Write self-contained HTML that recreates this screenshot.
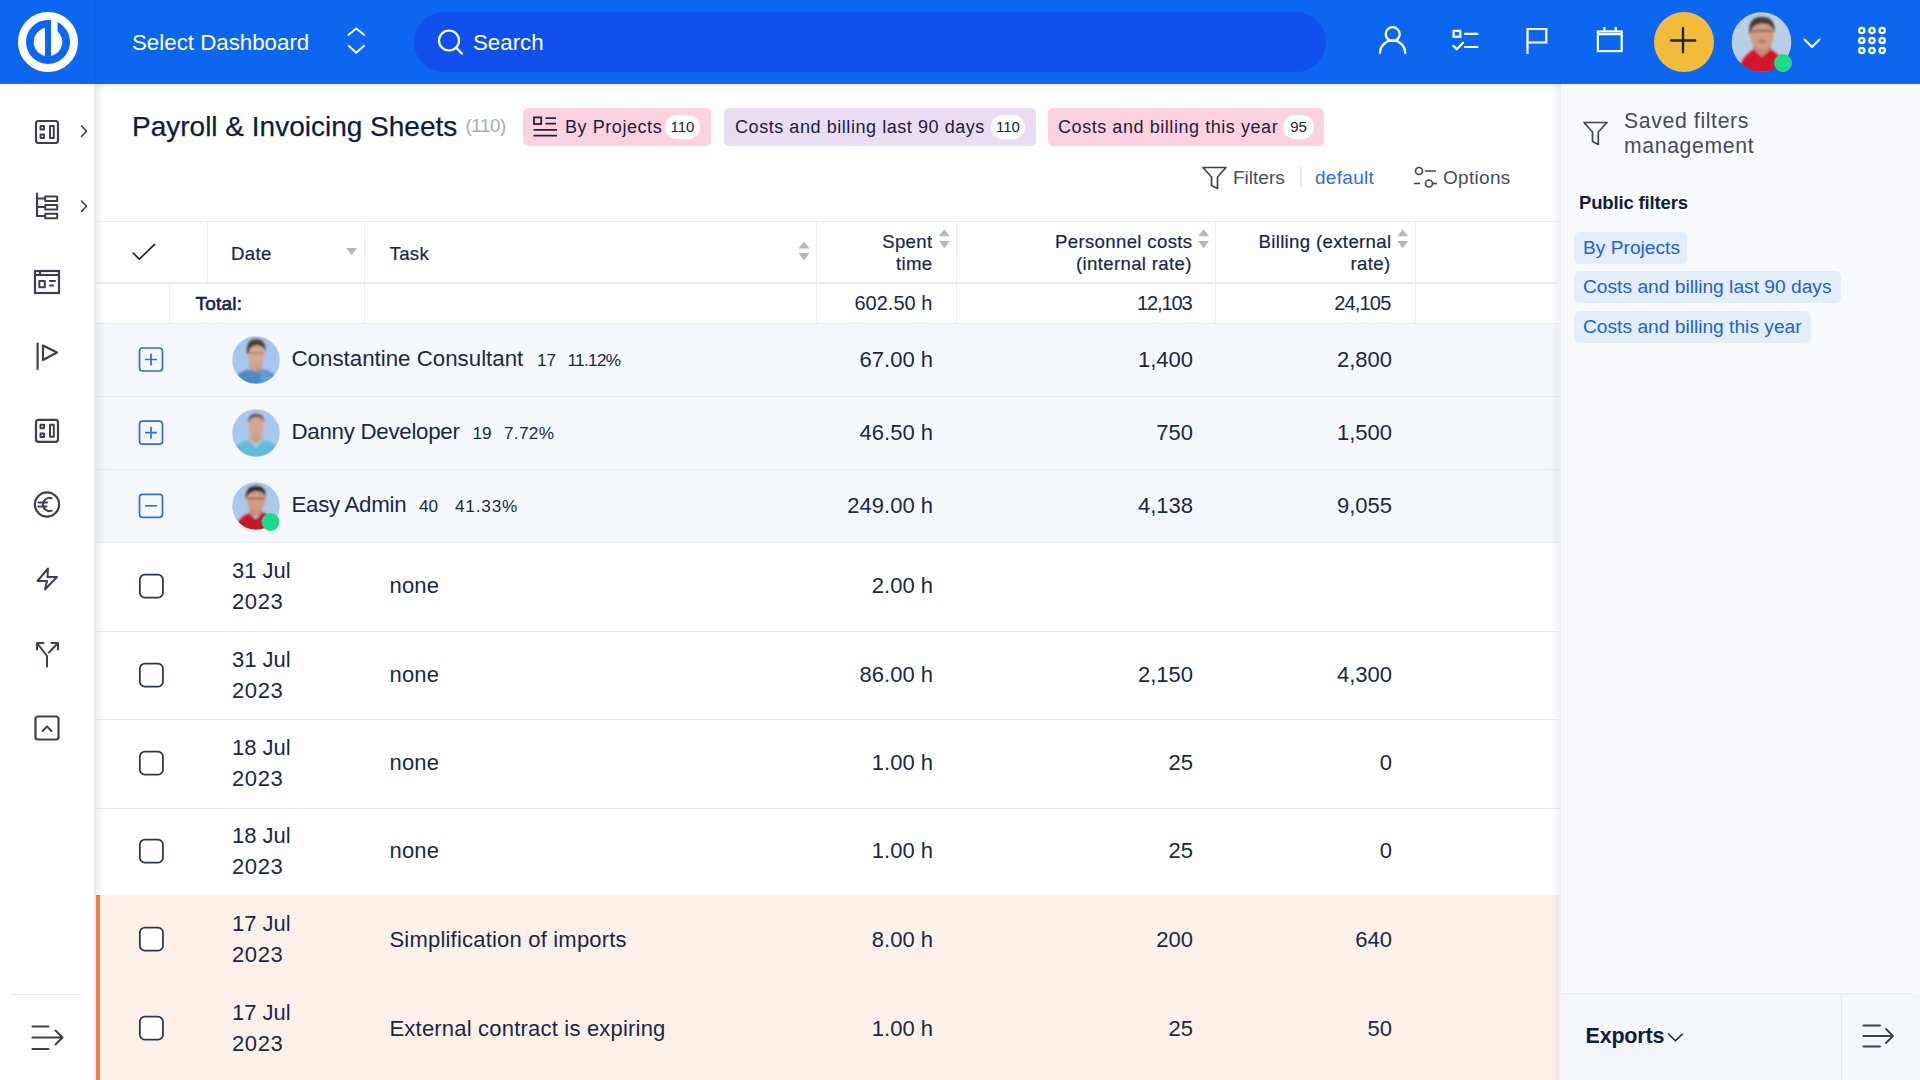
<!DOCTYPE html>
<html><head><meta charset="utf-8">
<style>
*{box-sizing:border-box;margin:0;padding:0}
html,body{width:1920px;height:1080px;overflow:hidden;background:#fff;font-family:"Liberation Sans",sans-serif;color:#0f1d3d}
.abs{position:absolute}
.nw{white-space:nowrap}
#top{position:absolute;left:0;top:0;width:1920px;height:84px;background:#0d66ef}
#side{position:absolute;left:0;top:84px;width:95px;height:996px;background:#fff}
#main{position:absolute;left:95px;top:84px;width:1465px;height:996px;background:#fff}
#panel{position:absolute;left:1560px;top:84px;width:360px;height:996px;background:#f9fafe}
.tag{position:absolute;top:24px;height:38px;border-radius:5px}
.tag .tt{position:absolute;top:8px;font-size:18px;line-height:22px;white-space:nowrap;color:#1a2140;letter-spacing:0.56px}
.bdg{position:absolute;top:7px;height:24px;border-radius:12px;background:#fff;font-size:15px;line-height:24px;text-align:center;color:#1a2140}
.chip{position:absolute;left:14px;height:32px;border-radius:6px;background:#e3edfb;color:#2061d6;font-size:19.2px;line-height:32px;padding-left:9px;white-space:nowrap}
</style></head><body>
<div id="top">
  <div class="abs" style="left:95px;top:0;width:1px;height:84px;background:rgba(0,0,40,0.05)"></div>
  <svg class="abs" style="left:0;top:0" width="95" height="84" viewBox="0 0 95 84">
    <circle cx="48" cy="42" r="26" fill="none" stroke="#fff" stroke-width="8"/>
    <circle cx="48" cy="42" r="14.3" fill="#fff"/>
    <rect x="45" y="20" width="6" height="37" fill="#0d66ef"/>
    <rect x="51" y="18" width="6.5" height="14" fill="#fff"/>
  </svg>
  <div class="abs nw" style="left:132px;top:30px;font-size:22.3px;line-height:26px;color:#fff">Select Dashboard</div>
  <svg class="abs" style="left:340px;top:20px" width="32" height="44" viewBox="0 0 32 44">
    <path d="M8.5 14.8 L16.3 8.5 L24 14.8 M8.5 25.8 L16.3 32.8 L24 25.8" fill="none" stroke="#fff" stroke-width="1.9" stroke-linecap="round" stroke-linejoin="round"/>
  </svg>
  <div class="abs" style="left:414px;top:12px;width:912px;height:60px;border-radius:30px;background:#1150ec"></div>
  <svg class="abs" style="left:430px;top:22px" width="40" height="40" viewBox="0 0 40 40">
    <circle cx="19" cy="18.5" r="10" fill="none" stroke="#fff" stroke-width="2.2"/>
    <path d="M26.3 26 L32 31.6" stroke="#fff" stroke-width="2.2" stroke-linecap="round"/>
  </svg>
  <div class="abs nw" style="left:473px;top:30px;font-size:22.3px;line-height:26px;color:#fff">Search</div>
  <svg class="abs" style="left:1370px;top:20px" width="46" height="44" viewBox="1370 20 46 44" fill="none" stroke="#fff" stroke-width="2.3" stroke-linecap="round">
    <circle cx="1392.7" cy="34.2" r="7"/>
    <path d="M1380 53 A12.6 12.6 0 0 1 1405.2 53"/>
  </svg>
  <svg class="abs" style="left:1440px;top:20px" width="200" height="44" viewBox="1440 20 200 44" fill="none" stroke="#fff" stroke-width="2.2">
    <rect x="1453.6" y="30.9" width="6.7" height="5.8"/>
    <path d="M1465 33.8 H1477.5 M1465 47 H1477.5" stroke-linecap="round"/>
    <path d="M1453.3 45.8 L1456.8 49.2 L1463 42.8" stroke-linecap="round" stroke-linejoin="round"/>
    <path d="M1527.5 54 V29 H1546.3 V42.5 H1527.5"/>
    <rect x="1597.9" y="31.4" width="23.8" height="19.7"/>
    <path d="M1597.9 34.2 H1621.7 M1604.4 27 V31 M1615.8 27 V31"/>
  </svg>
  <div class="abs" style="left:1654px;top:12px;width:60px;height:60px;border-radius:50%;background:#f3bb3b"></div>
  <svg class="abs" style="left:1654px;top:12px" width="60" height="60" viewBox="0 0 60 60">
    <path d="M17 28.5 H41.2 M29 16 V40.4" stroke="#1b2233" stroke-width="2.3" stroke-linecap="round"/>
  </svg>
  <svg class="abs" style="left:1731px;top:11px" width="62" height="62" viewBox="0 0 62 62">
    <defs><clipPath id="av0"><circle cx="30.5" cy="31" r="29.8"/></clipPath><filter id="avb" x="-10%" y="-10%" width="120%" height="120%"><feGaussianBlur stdDeviation="1.1"/></filter></defs>
    <g clip-path="url(#av0)"><g filter="url(#avb)">
      <rect x="-2" y="-2" width="66" height="66" fill="#b9cfe8"/>
      <path d="M22 34 L40 34 L41 46 H21 Z" fill="#c48a76"/>
      <ellipse cx="31" cy="24" rx="12" ry="14.5" fill="#d09a85"/>
      <path d="M18 24 Q16 5 31 5.5 Q45 5.5 44 22 Q41 12 31 12.5 Q21 13 18 24 Z" fill="#4a3a30"/>
      <path d="M20 20 H42" stroke="#5a4038" stroke-width="1.4" opacity="0.8"/>
      <ellipse cx="31" cy="30" rx="4" ry="2" fill="#c07a70"/>
      <path d="M6 62 Q9 46 22 38 L31 46 L40 38 Q52 44 56 62 Z" fill="#d3122f"/>
    </g></g>
    <circle cx="52" cy="52" r="9" fill="#1fd88c"/>
  </svg>
  <svg class="abs" style="left:1798px;top:30px" width="28" height="24" viewBox="0 0 28 24">
    <path d="M6.5 9.5 L14 17 L21.5 9.5" fill="none" stroke="#fff" stroke-width="1.9" stroke-linecap="round" stroke-linejoin="round"/>
  </svg>
  <svg class="abs" style="left:1850px;top:20px" width="44" height="44" viewBox="1850 20 44 44" fill="none" stroke="#fff" stroke-width="2.3">
    <circle cx="1861.8" cy="30.5" r="2.65"/><circle cx="1872" cy="30.5" r="2.65"/><circle cx="1882.2" cy="30.5" r="2.65"/>
    <circle cx="1861.8" cy="40.5" r="2.65"/><circle cx="1872" cy="40.5" r="2.65"/><circle cx="1882.2" cy="40.5" r="2.65"/>
    <circle cx="1861.8" cy="50.5" r="2.65"/><circle cx="1872" cy="50.5" r="2.65"/><circle cx="1882.2" cy="50.5" r="2.65"/>
  </svg>
</div>
<div id="side">
  <svg class="abs" style="left:0;top:-84px" width="95" height="1080" viewBox="0 0 95 1080" fill="none" stroke="#3b3e55" stroke-width="2.2" stroke-linecap="round" stroke-linejoin="round">
    <rect x="36" y="121" width="22" height="22" rx="2.5"/>
    <rect x="40.5" y="126" width="3.5" height="3.5" stroke-width="2"/>
    <rect x="40.5" y="134.6" width="3.5" height="3.5" stroke-width="2"/>
    <rect x="50" y="126" width="3.8" height="12" stroke-width="2"/>
    <path d="M81.5 126 L86.5 131.3 L81.5 136.5" stroke-width="1.6"/>
    <path d="M37 193.5 V216 H45 M37 198.5 H45 M37 207 H45"/>
    <rect x="45.2" y="196.5" width="12" height="4.5" stroke-width="2"/>
    <rect x="45.2" y="205" width="12" height="4.5" stroke-width="2"/>
    <rect x="45.2" y="213.8" width="12" height="4.5" stroke-width="2"/>
    <path d="M81.5 201 L86.5 206.2 L81.5 211.5" stroke-width="1.6"/>
    <rect x="35" y="271" width="24" height="22" stroke-linejoin="miter" stroke-linecap="butt"/>
    <path d="M35 275 H59 M40 271 V275" stroke-linecap="butt"/>
    <rect x="39.3" y="281" width="5.5" height="6.2" stroke-width="2"/>
    <path d="M50 281 H55 M50 285.4 H53" stroke-width="2"/>
    <path d="M37.6 343.5 V369"/>
    <path d="M43 345.5 L57 352.5 L43 360 Z"/>
    <rect x="36" y="419.8" width="22" height="22" rx="2.5"/>
    <rect x="40.5" y="424.8" width="3.5" height="3.5" stroke-width="2"/>
    <rect x="40.5" y="433.4" width="3.5" height="3.5" stroke-width="2"/>
    <rect x="50" y="424.8" width="3.8" height="12" stroke-width="2"/>
    <circle cx="47" cy="504.5" r="12.1"/>
    <path d="M51.5 498.2 A6.6 6.6 0 1 0 51.5 510.8 M38.5 502.5 H47 M38.5 506.5 H46.5" stroke-width="2"/>
    <path d="M48 568.5 L37.5 581 H47 L45 589.5 L57 577 H47.5 Z" stroke-width="2"/>
    <path d="M47 666.5 V656 L37 643 M37 643 V649.5 M37 643 H43.5 M49 652.5 L58 643 M58 643 H51.5 M58 643 V649.5" stroke-width="2"/>
    <rect x="35.5" y="716.5" width="23" height="23" rx="2.5"/>
    <path d="M42.5 731 L47 726.5 L51.5 731" stroke-width="2"/>
    <path d="M32.5 1026.5 H48.5 M32.5 1037.5 H62 M32.5 1049 H48.5 M55.5 1030.5 L62.5 1037.5 L55.5 1044.5" stroke-width="2"/>
  </svg>
  <div class="abs" style="left:12px;top:910px;width:70px;height:1px;background:#e6e8ee"></div>
  <div class="abs" style="left:94px;top:0;width:1px;height:996px;background:#e8e9ee"></div>
</div>
<div id="main">
  <div class="abs" style="left:0;top:0;width:1465px;height:10px;background:linear-gradient(#f3f4f7,rgba(255,255,255,0))"></div>
  <div class="abs" style="left:0;top:0;width:10px;height:996px;z-index:3;background:linear-gradient(90deg,rgba(200,204,215,0.35),rgba(255,255,255,0))"></div>
  <div class="abs" style="right:0;top:0;width:10px;height:996px;z-index:3;background:linear-gradient(270deg,rgba(205,208,218,0.3),rgba(255,255,255,0))"></div>
  <div class="abs nw" style="left:37px;top:26px;font-size:28px;line-height:34px;color:#0f1d3d;-webkit-text-stroke:0.25px #0f1d3d">Payroll &amp; Invoicing Sheets</div>
  <div class="abs nw" style="left:370.5px;top:29.5px;font-size:18.6px;line-height:24px;color:#a4a9b8;letter-spacing:-0.35px">(110)</div>
  <div class="tag" style="left:428px;width:188px;background:#fed1e0">
    <svg class="abs" style="left:9px;top:8px" width="26" height="22" viewBox="0 0 26 22" fill="none" stroke="#1f2540" stroke-width="1.8">
      <rect x="2" y="1.4" width="7.2" height="6.6"/>
      <path d="M13.5 2.2 H24 M13.5 7.6 H24 M1.5 13.8 H25 M1.5 19.6 H25"/>
    </svg>
    <span class="tt" style="left:42px">By Projects</span>
    <span class="bdg" style="left:142px;width:35px">110</span>
  </div>
  <div class="tag" style="left:629px;width:312px;background:#eadcf3">
    <span class="tt" style="left:11px">Costs and billing last 90 days</span>
    <span class="bdg" style="left:267px;width:34px">110</span>
  </div>
  <div class="tag" style="left:953px;width:276px;background:#fed1e0">
    <span class="tt" style="left:10px">Costs and billing this year</span>
    <span class="bdg" style="left:235px;width:31px">95</span>
  </div>
  <svg class="abs" style="left:1105px;top:80px" width="30" height="28" viewBox="1200 164 30 28" fill="none" stroke="#3f4358" stroke-width="1.7" stroke-linejoin="round">
    <path d="M1203 167.5 H1226 L1217.5 177 V188.5 L1211.5 185.6 V177 Z"/>
  </svg>
  <div class="abs nw" style="left:1138px;top:83px;font-size:19px;line-height:22px;color:#474b5e">Filters</div>
  <div class="abs" style="left:1205px;top:83px;width:2px;height:20px;background:#e6e8ee"></div>
  <div class="abs nw" style="left:1220px;top:83px;font-size:19px;line-height:22px;color:#2b6ddb;letter-spacing:0.3px">default</div>
  <svg class="abs" style="left:1315px;top:80px" width="30" height="28" viewBox="1410 164 30 28" fill="none" stroke="#3f4358" stroke-width="1.7">
    <circle cx="1419" cy="171" r="3.5"/><path d="M1425 171 H1436 M1414 183.5 H1420"/><circle cx="1429" cy="183.5" r="3.5"/><path d="M1432.5 183.5 H1437"/>
  </svg>
  <div class="abs nw" style="left:1348px;top:83px;font-size:19px;line-height:22px;color:#474b5e;letter-spacing:0.3px">Options</div>
</div>
<div id="tbl" class="abs" style="left:0;top:0;width:1920px;height:1080px">
<div class="abs" style="left:96px;top:221px;width:1463px;height:1px;background:#ebecee"></div>
<div class="abs" style="left:96px;top:282px;width:1463px;height:2px;background:#e8e9ed"></div>
<div class="abs" style="left:96px;top:323px;width:1463px;height:1px;background:#e8e9ed"></div>
<div class="abs" style="left:207px;top:222px;width:1px;height:60px;background:#ededf0"></div>
<div class="abs" style="left:364px;top:222px;width:1px;height:101px;background:#ededf0"></div>
<div class="abs" style="left:816px;top:222px;width:1px;height:101px;background:#ededf0"></div>
<div class="abs" style="left:956px;top:222px;width:1px;height:101px;background:#ededf0"></div>
<div class="abs" style="left:1215px;top:222px;width:1px;height:101px;background:#ededf0"></div>
<div class="abs" style="left:1415px;top:222px;width:1px;height:101px;background:#ededf0"></div>
<div class="abs" style="left:169px;top:284px;width:1px;height:39px;background:#ededf0"></div>
<svg class="abs" style="left:130px;top:240px" width="28" height="24" viewBox="130 240 28 24"><path d="M133.3 253.2 L139.4 259.1 L154.6 244.3" fill="none" stroke="#1f2540" stroke-width="1.7" stroke-linecap="round" stroke-linejoin="round"/></svg>
<div class="abs nw" style="left:231px;top:241.93px;font-size:18.6px;line-height:23.25px;color:#182848;font-weight:400;-webkit-text-stroke:0.2px #162545;letter-spacing:0.35px;">Date</div>
<div class="abs nw" style="left:389.5px;top:241.93px;font-size:18.6px;line-height:23.25px;color:#182848;font-weight:400;-webkit-text-stroke:0.2px #162545;letter-spacing:0.35px;">Task</div>
<div class="abs nw" style="right:987.5px;top:229.93px;font-size:18.6px;line-height:23.25px;color:#182848;font-weight:400;text-align:right;-webkit-text-stroke:0.2px #162545;letter-spacing:0.35px;">Spent</div>
<div class="abs nw" style="right:987.5px;top:251.93px;font-size:18.6px;line-height:23.25px;color:#182848;font-weight:400;text-align:right;-webkit-text-stroke:0.2px #162545;letter-spacing:0.35px;">time</div>
<div class="abs nw" style="right:727.5px;top:229.93px;font-size:18.6px;line-height:23.25px;color:#182848;font-weight:400;text-align:right;-webkit-text-stroke:0.2px #162545;letter-spacing:0.35px;">Personnel costs</div>
<div class="abs nw" style="right:728.2px;top:251.93px;font-size:18.6px;line-height:23.25px;color:#182848;font-weight:400;text-align:right;-webkit-text-stroke:0.2px #162545;letter-spacing:0.35px;">(internal rate)</div>
<div class="abs nw" style="right:528.5px;top:229.93px;font-size:18.6px;line-height:23.25px;color:#182848;font-weight:400;text-align:right;-webkit-text-stroke:0.2px #162545;letter-spacing:0.35px;">Billing (external</div>
<div class="abs nw" style="right:529.5px;top:251.93px;font-size:18.6px;line-height:23.25px;color:#182848;font-weight:400;text-align:right;-webkit-text-stroke:0.2px #162545;letter-spacing:0.35px;">rate)</div>
<svg class="abs" style="left:0;top:0" width="1920" height="300" viewBox="0 0 1920 300" fill="#b3b7c2"><path d="M346 248 L357 248 L351.5 255.3 Z"/><path d="M798.5 248.4 L804.0 241.4 L809.5 248.4 Z"/><path d="M798.5 253.1 L804.0 260.4 L809.5 253.1 Z"/><path d="M938.8 236.2 L944.3 229.2 L949.8 236.2 Z"/><path d="M938.8 240.89999999999998 L944.3 248.2 L949.8 240.89999999999998 Z"/><path d="M1198 236.2 L1203.5 229.2 L1209 236.2 Z"/><path d="M1198 240.89999999999998 L1203.5 248.2 L1209 240.89999999999998 Z"/><path d="M1397.2 236.2 L1402.7 229.2 L1408.2 236.2 Z"/><path d="M1397.2 240.89999999999998 L1402.7 248.2 L1408.2 240.89999999999998 Z"/></svg>
<div class="abs nw" style="left:195.5px;top:291.54px;font-size:19px;line-height:23.75px;color:#182848;font-weight:400;-webkit-text-stroke:0.6px #162545;letter-spacing:0.2px;">Total:</div>
<div class="abs nw" style="right:987.7px;top:290.57px;font-size:20px;line-height:25.0px;color:#182848;font-weight:400;text-align:right;">602.50 h</div>
<div class="abs nw" style="right:728.5px;top:290.57px;font-size:20px;line-height:25.0px;color:#182848;font-weight:400;text-align:right;letter-spacing:-1.1px;">12,103</div>
<div class="abs nw" style="right:529.5px;top:290.57px;font-size:20px;line-height:25.0px;color:#182848;font-weight:400;text-align:right;letter-spacing:-0.8px;">24,105</div>
<div class="abs" style="left:96px;top:324px;width:1463px;height:72px;background:#f4f8fd"></div>
<div class="abs" style="left:96px;top:396px;width:1463px;height:1px;background:#e7eaef"></div>
<svg class="abs" style="left:0;top:0" width="200" height="560" viewBox="0 0 200 560" fill="none" stroke="#2f6ed9" stroke-width="1.7"><rect x="139.5" y="348.0" width="23" height="23" rx="3"/><path d="M145 359.5 H157 M151 353.5 V365.5"/></svg>
<svg class="abs" style="left:230px;top:334.5px" width="52" height="52" viewBox="0 0 52 52"><defs><clipPath id="clc"><circle cx="24" cy="24" r="23.8"/></clipPath><filter id="blc" x="-10%" y="-10%" width="120%" height="120%"><feGaussianBlur stdDeviation="0.9"/></filter></defs><g transform="translate(2 1)"><g clip-path="url(#clc)"><g filter="url(#blc)"><rect x="-2" y="-2" width="52" height="52" fill="#a5c7ec"/><path d="M17 26 L30 26 L31 36 H17 Z" fill="#cf9c86"/><ellipse cx="24" cy="19.5" rx="8.3" ry="10" fill="#d6a791"/><path d="M14.5 17 Q13.5 3 24 2.8 Q34.5 3 34 16 Q31 9 24 9.5 Q17.5 10 16 18 Z" fill="#57402f"/><path d="M16.5 17 H32" stroke="#6b5248" stroke-width="1" opacity="0.7"/><path d="M0 50 Q2 37 14 34 Q20 33 24 36 Q28 33 34 34 Q45 37 48 50 Z" fill="#4d8ac6"/><path d="M28 35 Q40 36 46 48 L30 50 Z" fill="#73a9d8" opacity="0.7"/></g></g></g></svg>
<div class="abs nw" style="left:291.5px;top:344.83px;font-size:22.3px;line-height:27.88px;color:#182848;font-weight:400;letter-spacing:0px;">Constantine Consultant</div>
<div class="abs nw" style="left:537px;top:349.79px;font-size:17.2px;line-height:21.5px;color:#182848;font-weight:400;">17</div>
<div class="abs nw" style="left:567.5px;top:349.79px;font-size:17.2px;line-height:21.5px;color:#182848;font-weight:400;letter-spacing:-0.7px;">11.12%</div>
<div class="abs nw" style="right:987px;top:346.13px;font-size:22px;line-height:27.5px;color:#182848;font-weight:400;text-align:right;">67.00 h</div>
<div class="abs nw" style="right:727px;top:346.13px;font-size:22px;line-height:27.5px;color:#182848;font-weight:400;text-align:right;">1,400</div>
<div class="abs nw" style="right:528px;top:346.13px;font-size:22px;line-height:27.5px;color:#182848;font-weight:400;text-align:right;">2,800</div>
<div class="abs" style="left:96px;top:397px;width:1463px;height:72.30000000000001px;background:#f4f8fd"></div>
<div class="abs" style="left:96px;top:469px;width:1463px;height:1px;background:#e7eaef"></div>
<svg class="abs" style="left:0;top:0" width="200" height="560" viewBox="0 0 200 560" fill="none" stroke="#2f6ed9" stroke-width="1.7"><rect x="139.5" y="421.15" width="23" height="23" rx="3"/><path d="M145 432.65 H157 M151 426.65 V438.65"/></svg>
<svg class="abs" style="left:230px;top:407.65px" width="52" height="52" viewBox="0 0 52 52"><defs><clipPath id="cld"><circle cx="24" cy="24" r="23.8"/></clipPath><filter id="bld" x="-10%" y="-10%" width="120%" height="120%"><feGaussianBlur stdDeviation="0.9"/></filter></defs><g transform="translate(2 1)"><g clip-path="url(#cld)"><g filter="url(#bld)"><rect x="-2" y="-2" width="52" height="52" fill="#a7c8ec"/><path d="M18 25 L30 25 L31 36 H17 Z" fill="#cfa28b"/><ellipse cx="24" cy="16.5" rx="8" ry="11.5" fill="#d5a68f"/><path d="M15.5 15 Q15.5 4 24 4.5 Q32.5 4.5 32.5 13 Q30 8 24 8 Q18 8 15.5 15 Z" fill="#6e5646"/><path d="M-1 50 Q2 34 15 31 L24 38 L33 31 Q46 34 49 50 Z" fill="#62bbe0"/><path d="M19 31 L24 38 L29 31" fill="none" stroke="#9fd6ea" stroke-width="1.5"/></g></g></g></svg>
<div class="abs nw" style="left:291.5px;top:417.98px;font-size:22.3px;line-height:27.88px;color:#182848;font-weight:400;letter-spacing:-0.28px;">Danny Developer</div>
<div class="abs nw" style="left:472.5px;top:422.94px;font-size:17.2px;line-height:21.5px;color:#182848;font-weight:400;">19</div>
<div class="abs nw" style="left:504px;top:422.94px;font-size:17.2px;line-height:21.5px;color:#182848;font-weight:400;letter-spacing:0.3px;">7.72%</div>
<div class="abs nw" style="right:987px;top:419.28px;font-size:22px;line-height:27.5px;color:#182848;font-weight:400;text-align:right;">46.50 h</div>
<div class="abs nw" style="right:727px;top:419.28px;font-size:22px;line-height:27.5px;color:#182848;font-weight:400;text-align:right;">750</div>
<div class="abs nw" style="right:528px;top:419.28px;font-size:22px;line-height:27.5px;color:#182848;font-weight:400;text-align:right;">1,500</div>
<div class="abs" style="left:96px;top:470.3px;width:1463px;height:71.99999999999994px;background:#f4f8fd"></div>
<div class="abs" style="left:96px;top:542px;width:1463px;height:1px;background:#e7eaef"></div>
<svg class="abs" style="left:0;top:0" width="200" height="560" viewBox="0 0 200 560" fill="none" stroke="#2f6ed9" stroke-width="1.7"><rect x="139.5" y="494.29999999999995" width="23" height="23" rx="3"/><path d="M145 505.79999999999995 H157"/></svg>
<svg class="abs" style="left:230px;top:480.79999999999995px" width="52" height="52" viewBox="0 0 52 52"><defs><clipPath id="cle"><circle cx="24" cy="24" r="23.8"/></clipPath><filter id="ble" x="-10%" y="-10%" width="120%" height="120%"><feGaussianBlur stdDeviation="0.9"/></filter></defs><g transform="translate(2 1)"><g clip-path="url(#cle)"><g filter="url(#ble)"><rect x="-2" y="-2" width="52" height="52" fill="#a9c9eb"/><path d="M17 25 L30 25 L31 34 H17 Z" fill="#c78f7b"/><ellipse cx="24" cy="18" rx="9.3" ry="11" fill="#d09a85"/><path d="M13.5 17 Q12.5 3.5 24 3.5 Q35 3.5 34 15 Q31 9 24 9 Q16.5 9.5 13.5 17 Z" fill="#3d2c24"/><path d="M15.5 16.5 H33" stroke="#4a3530" stroke-width="1.2" opacity="0.8"/><path d="M2 50 Q5 35 16 31 L24 37 L31 30 Q42 33 46 50 Z" fill="#c8122c"/></g></g></g><circle cx="40.5" cy="41" r="9" fill="#1cd88c"/></svg>
<div class="abs nw" style="left:291.5px;top:491.13px;font-size:22.3px;line-height:27.88px;color:#182848;font-weight:400;letter-spacing:-0.3px;">Easy Admin</div>
<div class="abs nw" style="left:419px;top:496.09px;font-size:17.2px;line-height:21.5px;color:#182848;font-weight:400;">40</div>
<div class="abs nw" style="left:455px;top:496.09px;font-size:17.2px;line-height:21.5px;color:#182848;font-weight:400;letter-spacing:0.8px;">41.33%</div>
<div class="abs nw" style="right:987px;top:492.43px;font-size:22px;line-height:27.5px;color:#182848;font-weight:400;text-align:right;">249.00 h</div>
<div class="abs nw" style="right:727px;top:492.43px;font-size:22px;line-height:27.5px;color:#182848;font-weight:400;text-align:right;">4,138</div>
<div class="abs nw" style="right:528px;top:492.43px;font-size:22px;line-height:27.5px;color:#182848;font-weight:400;text-align:right;">9,055</div>
<div class="abs" style="left:96px;top:631px;width:1463px;height:1px;background:#e7e8eb"></div>
<svg class="abs" style="left:136px;top:571.2px" width="32" height="32" viewBox="0 0 32 32"><rect x="3.85" y="3.6" width="23.1" height="23.1" rx="5" fill="#fff" stroke="#2b3450" stroke-width="1.75"/></svg>
<div class="abs nw" style="left:232px;top:557.03px;font-size:22px;line-height:27.5px;color:#182848;font-weight:400;">31 Jul</div>
<div class="abs nw" style="left:232px;top:588.23px;font-size:22px;line-height:27.5px;color:#182848;font-weight:400;letter-spacing:0.6px;">2023</div>
<div class="abs nw" style="left:389.5px;top:572.43px;font-size:22px;line-height:27.5px;color:#182848;font-weight:400;letter-spacing:0.2px;">none</div>
<div class="abs nw" style="right:987px;top:572.43px;font-size:22px;line-height:27.5px;color:#182848;font-weight:400;text-align:right;">2.00 h</div>
<div class="abs" style="left:96px;top:719px;width:1463px;height:1px;background:#e7e8eb"></div>
<svg class="abs" style="left:136px;top:660.2px" width="32" height="32" viewBox="0 0 32 32"><rect x="3.85" y="3.6" width="23.1" height="23.1" rx="5" fill="#fff" stroke="#2b3450" stroke-width="1.75"/></svg>
<div class="abs nw" style="left:232px;top:646.03px;font-size:22px;line-height:27.5px;color:#182848;font-weight:400;">31 Jul</div>
<div class="abs nw" style="left:232px;top:677.23px;font-size:22px;line-height:27.5px;color:#182848;font-weight:400;letter-spacing:0.6px;">2023</div>
<div class="abs nw" style="left:389.5px;top:661.43px;font-size:22px;line-height:27.5px;color:#182848;font-weight:400;letter-spacing:0.2px;">none</div>
<div class="abs nw" style="right:987px;top:661.43px;font-size:22px;line-height:27.5px;color:#182848;font-weight:400;text-align:right;">86.00 h</div>
<div class="abs nw" style="right:727px;top:661.43px;font-size:22px;line-height:27.5px;color:#182848;font-weight:400;text-align:right;">2,150</div>
<div class="abs nw" style="right:528px;top:661.43px;font-size:22px;line-height:27.5px;color:#182848;font-weight:400;text-align:right;">4,300</div>
<div class="abs" style="left:96px;top:808px;width:1463px;height:1px;background:#e7e8eb"></div>
<svg class="abs" style="left:136px;top:747.7px" width="32" height="32" viewBox="0 0 32 32"><rect x="3.85" y="3.6" width="23.1" height="23.1" rx="5" fill="#fff" stroke="#2b3450" stroke-width="1.75"/></svg>
<div class="abs nw" style="left:232px;top:733.53px;font-size:22px;line-height:27.5px;color:#182848;font-weight:400;">18 Jul</div>
<div class="abs nw" style="left:232px;top:764.73px;font-size:22px;line-height:27.5px;color:#182848;font-weight:400;letter-spacing:0.6px;">2023</div>
<div class="abs nw" style="left:389.5px;top:748.93px;font-size:22px;line-height:27.5px;color:#182848;font-weight:400;letter-spacing:0.2px;">none</div>
<div class="abs nw" style="right:987px;top:748.93px;font-size:22px;line-height:27.5px;color:#182848;font-weight:400;text-align:right;">1.00 h</div>
<div class="abs nw" style="right:727px;top:748.93px;font-size:22px;line-height:27.5px;color:#182848;font-weight:400;text-align:right;">25</div>
<div class="abs nw" style="right:528px;top:748.93px;font-size:22px;line-height:27.5px;color:#182848;font-weight:400;text-align:right;">0</div>
<div class="abs" style="left:96px;top:895px;width:1463px;height:1px;background:#e7e8eb"></div>
<svg class="abs" style="left:136px;top:836.2px" width="32" height="32" viewBox="0 0 32 32"><rect x="3.85" y="3.6" width="23.1" height="23.1" rx="5" fill="#fff" stroke="#2b3450" stroke-width="1.75"/></svg>
<div class="abs nw" style="left:232px;top:822.03px;font-size:22px;line-height:27.5px;color:#182848;font-weight:400;">18 Jul</div>
<div class="abs nw" style="left:232px;top:853.23px;font-size:22px;line-height:27.5px;color:#182848;font-weight:400;letter-spacing:0.6px;">2023</div>
<div class="abs nw" style="left:389.5px;top:837.43px;font-size:22px;line-height:27.5px;color:#182848;font-weight:400;letter-spacing:0.2px;">none</div>
<div class="abs nw" style="right:987px;top:837.43px;font-size:22px;line-height:27.5px;color:#182848;font-weight:400;text-align:right;">1.00 h</div>
<div class="abs nw" style="right:727px;top:837.43px;font-size:22px;line-height:27.5px;color:#182848;font-weight:400;text-align:right;">25</div>
<div class="abs nw" style="right:528px;top:837.43px;font-size:22px;line-height:27.5px;color:#182848;font-weight:400;text-align:right;">0</div>
<div class="abs" style="left:96px;top:894.6px;width:1463px;height:89.39999999999998px;background:#fdf0e8"></div>
<div class="abs" style="left:96px;top:984px;width:1463px;height:1px;background:#f5e6df"></div>
<svg class="abs" style="left:136px;top:924.3px" width="32" height="32" viewBox="0 0 32 32"><rect x="3.85" y="3.6" width="23.1" height="23.1" rx="5" fill="#fff" stroke="#2b3450" stroke-width="1.75"/></svg>
<div class="abs nw" style="left:232px;top:910.13px;font-size:22px;line-height:27.5px;color:#182848;font-weight:400;">17 Jul</div>
<div class="abs nw" style="left:232px;top:941.33px;font-size:22px;line-height:27.5px;color:#182848;font-weight:400;letter-spacing:0.6px;">2023</div>
<div class="abs nw" style="left:389.5px;top:925.53px;font-size:22px;line-height:27.5px;color:#182848;font-weight:400;letter-spacing:0.2px;">Simplification of imports</div>
<div class="abs nw" style="right:987px;top:925.53px;font-size:22px;line-height:27.5px;color:#182848;font-weight:400;text-align:right;">8.00 h</div>
<div class="abs nw" style="right:727px;top:925.53px;font-size:22px;line-height:27.5px;color:#182848;font-weight:400;text-align:right;">200</div>
<div class="abs nw" style="right:528px;top:925.53px;font-size:22px;line-height:27.5px;color:#182848;font-weight:400;text-align:right;">640</div>
<div class="abs" style="left:96px;top:984px;width:1463px;height:96px;background:#fdf0e8"></div>
<svg class="abs" style="left:136px;top:1013.3px" width="32" height="32" viewBox="0 0 32 32"><rect x="3.85" y="3.6" width="23.1" height="23.1" rx="5" fill="#fff" stroke="#2b3450" stroke-width="1.75"/></svg>
<div class="abs nw" style="left:232px;top:999.13px;font-size:22px;line-height:27.5px;color:#182848;font-weight:400;">17 Jul</div>
<div class="abs nw" style="left:232px;top:1030.33px;font-size:22px;line-height:27.5px;color:#182848;font-weight:400;letter-spacing:0.6px;">2023</div>
<div class="abs nw" style="left:389.5px;top:1014.53px;font-size:22px;line-height:27.5px;color:#182848;font-weight:400;letter-spacing:0.2px;">External contract is expiring</div>
<div class="abs nw" style="right:987px;top:1014.53px;font-size:22px;line-height:27.5px;color:#182848;font-weight:400;text-align:right;">1.00 h</div>
<div class="abs nw" style="right:727px;top:1014.53px;font-size:22px;line-height:27.5px;color:#182848;font-weight:400;text-align:right;">25</div>
<div class="abs nw" style="right:528px;top:1014.53px;font-size:22px;line-height:27.5px;color:#182848;font-weight:400;text-align:right;">50</div>
<div class="abs" style="left:96px;top:895px;width:4px;height:185px;z-index:4;background:#ee7d43"></div>
</div>
<div id="panel">
  <div class="abs" style="left:0;top:0;width:1px;height:996px;background:#e9ebf0"></div>
  <svg class="abs" style="left:20px;top:34px" width="32" height="32" viewBox="1580 118 32 32" fill="none" stroke="#3f4358" stroke-width="1.7" stroke-linejoin="round">
    <path d="M1584 122.5 H1607 L1598.3 132 V144.5 L1592.5 141.5 V132 Z"/>
  </svg>
  <div class="abs" style="left:64px;top:25px;font-size:21.2px;line-height:24.5px;color:#464a5c;width:290px;letter-spacing:0.65px">Saved filters<br>management</div>
  <div class="abs nw" style="left:19px;top:107.5px;font-size:18.5px;line-height:22px;color:#0f1d3d;font-weight:700;letter-spacing:-0.15px">Public filters</div>
  <div class="chip" style="top:148px;width:113px">By Projects</div>
  <div class="chip" style="top:187px;width:267px">Costs and billing last 90 days</div>
  <div class="chip" style="top:226.5px;width:236.5px">Costs and billing this year</div>
  <div class="abs" style="left:0;top:910px;width:360px;height:86px;background:#f3f6fb"></div>
  <div class="abs" style="left:0;top:909px;width:353px;height:2px;background:#e8ecf3"></div>
  <div class="abs" style="left:281px;top:911px;width:1px;height:85px;background:#e3e7ee"></div>
  <div class="abs nw" style="left:25.5px;top:938.5px;font-size:21.5px;line-height:26px;color:#0f1d3d;font-weight:700;letter-spacing:-0.2px">Exports</div>
  <svg class="abs" style="left:104px;top:944px" width="24" height="20" viewBox="1664 1028 24 20" fill="none" stroke="#1f2540" stroke-width="1.6" stroke-linecap="round" stroke-linejoin="round">
    <path d="M1668.5 1034 L1675.5 1040.8 L1682.5 1034"/>
  </svg>
  <svg class="abs" style="left:300px;top:936px" width="40" height="30" viewBox="1860 1020 40 30" fill="none" stroke="#3f4358" stroke-width="2" stroke-linecap="round" stroke-linejoin="round">
    <path d="M1863.5 1025.5 H1880 M1863.5 1036 H1893 M1863.5 1046.5 H1880 M1886 1029 L1893 1036 L1886 1043"/>
  </svg>
</div>
</body></html>
